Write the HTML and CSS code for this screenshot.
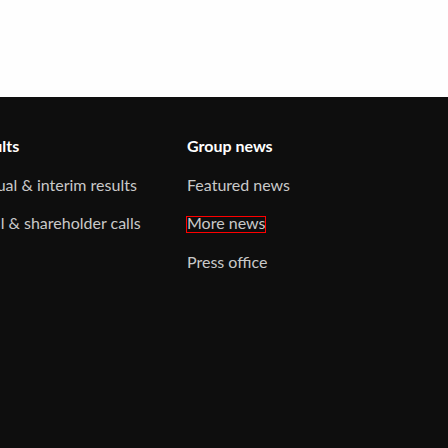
FILE: index.html
```html
<!DOCTYPE html>
<html lang="en">
<head>
<meta charset="utf-8">
<title>Footer</title>
<link rel="stylesheet" href="styles.css">
</head>
<body>
<header class="top"></header>
<footer class="footer">
  <div class="cols">
    <nav class="col">
      <h3 class="col-title">Results</h3>
      <ul class="links">
        <li><a class="link" href="#">Annual &amp; interim results</a></li>
        <li><a class="link" href="#">P call &amp; shareholder calls</a></li>
      </ul>
    </nav>
    <nav class="col">
      <h3 class="col-title">Group news</h3>
      <ul class="links">
        <li><a class="link" href="#">Featured news</a></li>
        <li><a class="link focused" href="#">More news</a></li>
        <li><a class="link" href="#">Press office</a></li>
      </ul>
    </nav>
  </div>
</footer>
</body>
</html>
```
FILE: styles.css
```css
* { box-sizing: border-box; }
html, body { margin: 0; padding: 0; }
body {
  width: 448px;
  height: 448px;
  overflow: hidden;
  background: #0e0e0e;
  font-family: Lato, "Open Sans", sans-serif;
  font-size: 16px;
  line-height: 24px;
}
.top {
  height: 97px;
  background: #fefefe;
}
.footer {
  padding-top: 37px;
}
.cols {
  display: grid;
  grid-template-columns: 219px 219px;
  margin-left: -32px;
}
.col { min-width: 0; white-space: nowrap; }
.col-title {
  margin: 0;
  font-size: 16px;
  font-weight: 700;
  color: #ffffff;
  line-height: 24px;
}
.links {
  list-style: none;
  margin: 0;
  padding: 0;
}
.links li {
  margin-top: 14.6px;
}
.link {
  color: #c9c9c9;
  text-decoration: none;
}
.focused {
  display: inline-block;
  line-height: 12px;
  padding-bottom: 2.5px;
  outline: 1px solid #ff0000;
}
```
